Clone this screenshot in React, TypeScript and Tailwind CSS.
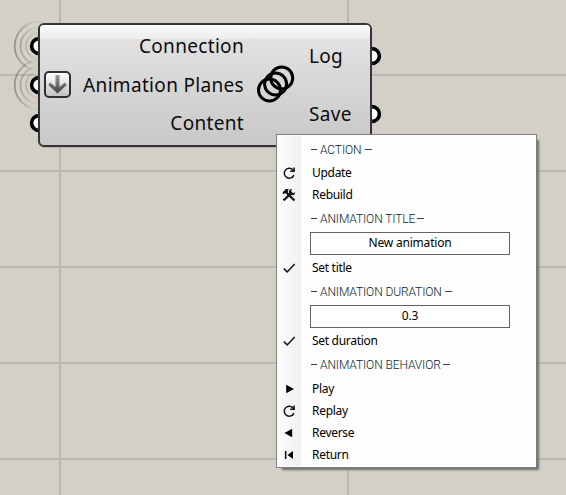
import type { ReactNode } from "react";

const rowsY = [74, 170, 266, 362, 458];
const colsX = [59, 347];

function Grip({ className }: { className: string }) {
  return (
    <svg className={`absolute ${className}`} width="20" height="20" viewBox="0 0 20 20">
      <circle cx="10" cy="10" r="7.4" fill="#fff" stroke="#000" strokeWidth="3.6" />
    </svg>
  );
}

function Waves({ className }: { className: string }) {
  return (
    <svg className={`absolute ${className}`} width="30" height="60" viewBox="0 0 30 60" fill="none" stroke="url(#wave)" strokeWidth="1.7">
      <defs>
        <linearGradient id="wave" gradientUnits="userSpaceOnUse" x1="0" y1="0" x2="30" y2="0">
          <stop offset="0.1" stopColor="#66645e" stopOpacity="0.6" />
          <stop offset="0.75" stopColor="#66645e" stopOpacity="0.08" />
        </linearGradient>
      </defs>
      <circle cx="28" cy="30" r="13" />
      <circle cx="28" cy="30" r="18.5" />
      <circle cx="28" cy="30" r="24.3" />
    </svg>
  );
}

function Refresh() {
  return (
    <svg width="14" height="14" viewBox="0 0 14 14" fill="none" stroke="#111" strokeWidth="1.5">
      <path d="M11.9 9.1A5 5 0 1 1 10.8 3.6L12 5" />
      <path d="M12.1 1.4V5.3H8.2" />
    </svg>
  );
}

function Tools() {
  return (
    <svg width="14" height="14" viewBox="0 0 14 14" fill="none" stroke="#111">
      <path d="M1.6 12.4L9 5.2" strokeWidth="2.2" />
      <path d="M10 1A3.1 3.1 0 1 0 13.2 4.2L11.1 5.2L9.1 3.2Z" fill="#111" stroke="none" />
      <path d="M4.7 4.7L12.4 12.5" strokeWidth="2.2" />
      <path d="M.4 4.9L2 2.7L4 1.1H7L5.6 2.7L6.5 3.8L4.2 6.1L3 5L1.8 6.3Z" fill="#111" stroke="none" />
    </svg>
  );
}

function Check() {
  return (
    <svg width="14" height="14" viewBox="0 0 14 14" fill="none" stroke="#111" strokeWidth="1.5">
      <path d="M1.7 7.5L5.2 10.9L12.7 3.1" />
    </svg>
  );
}

function Play() {
  return (
    <svg width="14" height="14" viewBox="0 0 14 14" fill="#000">
      <path d="M4.2 2.8L12 7L4.2 11.2Z" />
    </svg>
  );
}

function Reverse() {
  return (
    <svg width="14" height="14" viewBox="0 0 14 14" fill="#000">
      <path d="M10.2 2.8L2.4 7L10.2 11.2Z" />
    </svg>
  );
}

function Return() {
  return (
    <svg width="14" height="14" viewBox="0 0 14 14" fill="#000">
      <path d="M2.9 3H4.4V11H2.9ZM11 3V11L5.5 7Z" />
    </svg>
  );
}

function Heading({ children, width }: { children: string; width: string }) {
  return (
    <div className="flex h-[25px] items-center pl-[34px] font-[Roboto,sans-serif] text-[12px] font-light text-[#06272f]">
      <span className="mr-[3px] h-px w-[6px] shrink-0 bg-[#2c474c]" />
      <span className={`whitespace-nowrap tracking-[-0.1px] ${width}`}>{children}</span>
      <span className="ml-[3px] h-px w-[7px] shrink-0 bg-[#2c474c]" />
    </div>
  );
}

function Item({ icon, children }: { icon: ReactNode; children: string }) {
  return (
    <div className="flex h-[22px] items-center">
      <span className="flex w-[24px] justify-center">{icon}</span>
      <span className="pl-[11px] text-[12px] leading-[22px] tracking-[-0.3px]">{children}</span>
    </div>
  );
}

function Field({ value }: { value: string }) {
  return (
    <div className="flex h-[26px] items-start pl-[33px] pt-[1px]">
      <input
        readOnly
        value={value}
        className="h-[23px] w-[200px] border border-[#646464] bg-white pb-[3px] text-center text-[12px] tracking-[-0.2px] text-black outline-none"
      />
    </div>
  );
}

export default function App() {
  return (
    <main className="relative h-[495px] w-[566px] overflow-hidden bg-[#d4d0c8] font-['Noto_Sans',sans-serif] text-black">
      {rowsY.map((y) => (
        <div key={y} className="absolute left-0 h-[2px] w-full bg-[#bbb7b0]" style={{ top: y }} />
      ))}
      {colsX.map((x) => (
        <div key={x} className="absolute top-0 h-full w-[2px] bg-[#bbb7b0]" style={{ left: x }} />
      ))}

      <Waves className="left-[11px] top-[16px]" />
      <Waves className="left-[11px] top-[55px]" />
      <Grip className="left-[29px] top-[36px]" />
      <Grip className="left-[29px] top-[75px]" />
      <Grip className="left-[29px] top-[113px]" />
      <Grip className="left-[362px] top-[46px]" />
      <Grip className="left-[362px] top-[104px]" />

      <section className="absolute left-[38px] top-[23px] flex h-[124px] w-[334px] rounded-[6px] border-2 border-[#353535] bg-linear-to-b from-[#e5e5e5] to-[#c8c8c8] text-[19px] tracking-[0.32px] text-[#0c0c0c] shadow-[0_1px_1px_#b5b2aa]">
        <div className="absolute inset-x-0 top-0 h-[14px] rounded-t-[4px] bg-linear-to-b from-[#fcfcfc] to-[#ececec]" />
        <div className="relative flex w-[204px] flex-col items-end pt-[2px] leading-[38.5px]">
          <span>Connection</span>
          <div className="flex w-full items-center justify-between pl-[4px]">
            <svg width="27" height="27" viewBox="0 0 27 27">
              <defs>
                <linearGradient id="arrow" gradientUnits="userSpaceOnUse" x1="0" y1="4" x2="0" y2="23">
                  <stop offset="0" stopColor="#999" />
                  <stop offset="1" stopColor="#404040" />
                </linearGradient>
                <linearGradient id="button" x1="0" y1="0" x2="0" y2="1">
                  <stop offset="0" stopColor="#fff" />
                  <stop offset="1" stopColor="#c0c0c0" />
                </linearGradient>
              </defs>
              <rect x="1" y="1" width="25" height="25" rx="4" fill="url(#button)" stroke="#303030" strokeWidth="2" />
              <path d="M11.5 4H15.5V16L20.8 11.4L22.8 14L13.5 22.5L4.2 14L6.2 11.4L11.5 16Z" fill="url(#arrow)" />
            </svg>
            <span>Animation Planes</span>
          </div>
          <span>Content</span>
        </div>
        <svg className="relative ml-[11px] mt-[38px] shrink-0" width="42" height="42" viewBox="0 0 42 42" fill="none" stroke="#000" strokeWidth="3">
          <circle cx="14.5" cy="27" r="11" />
          <circle cx="20.6" cy="21" r="11" />
          <circle cx="26.7" cy="14.9" r="11" />
        </svg>
        <div className="relative ml-[12px] flex flex-col pt-[2px] leading-[58px]">
          <span>Log</span>
          <span>Save</span>
        </div>
      </section>

      <menu className="absolute left-[276px] top-[134px] h-[334px] w-[261px] border border-[#808080] bg-[#fdfdfd] shadow-[4px_4px_2px_-2px_#6d6f69]">
        <div className="absolute bottom-px left-px top-px w-[23px] bg-linear-to-r from-[#fcfcfc] to-[#f0f0f0]" />
        <div className="relative pt-[2px]">
          <Heading width="w-[42px]">ACTION</Heading>
          <Item icon={<Refresh />}>Update</Item>
          <Item icon={<Tools />}>Rebuild</Item>
          <Heading width="w-[94px]">ANIMATION TITLE</Heading>
          <Field value="New animation" />
          <Item icon={<Check />}>Set title</Item>
          <Heading width="w-[122px]">ANIMATION DURATION</Heading>
          <Field value="0.3" />
          <Item icon={<Check />}>Set duration</Item>
          <Heading width="w-[120px]">ANIMATION BEHAVIOR</Heading>
          <div className="pt-px">
            <Item icon={<Play />}>Play</Item>
            <Item icon={<Refresh />}>Replay</Item>
            <Item icon={<Reverse />}>Reverse</Item>
            <Item icon={<Return />}>Return</Item>
          </div>
        </div>
      </menu>
    </main>
  );
}
